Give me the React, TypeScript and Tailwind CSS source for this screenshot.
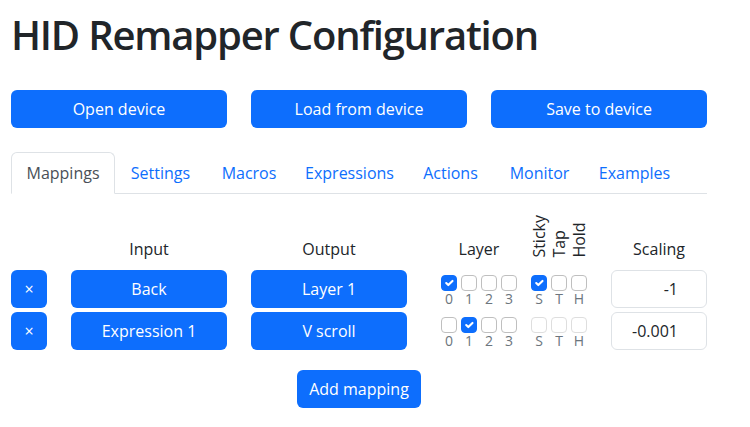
import React from "react";

const BLUE = "bg-[#0d6efd]";

function Check({ checked, disabled }: { checked?: boolean; disabled?: boolean }) {
  return (
    <div
      className={`w-[16px] h-[16px] rounded-[4px] border flex items-center justify-center ${
        checked ? "bg-[#0d6efd] border-[#0d6efd]" : "bg-white border-[#bfbfbf]"
      } ${disabled ? "opacity-50" : ""}`}
    >
      {checked && (
        <svg viewBox="0 0 20 20" className="w-[16px] h-[16px]">
          <path d="M6 10l3 3l6-6" fill="none" stroke="#fff" strokeWidth="3" strokeLinecap="round" strokeLinejoin="round" />
        </svg>
      )}
    </div>
  );
}

function CheckGroup({ labels, checkedIndex, disabled }: { labels: string[]; checkedIndex: number; disabled?: boolean }) {
  return (
    <div className="flex gap-[4px] self-start mt-[5px]">
      {labels.map((l, i) => (
        <div key={l} className="flex flex-col items-center w-[16px]">
          <Check checked={i === checkedIndex} disabled={disabled} />
          <div className="text-[14px] leading-[16px] text-[#6c757d]">{l}</div>
        </div>
      ))}
    </div>
  );
}

function Btn({ children, className = "" }: { children: React.ReactNode; className?: string }) {
  return (
    <div
      className={`${BLUE} text-white h-[38px] rounded-[6px] flex items-center justify-center text-[16px] leading-6 ${className}`}
    >
      {children}
    </div>
  );
}

function Row({ input, output, layer, sticky, stickyDisabled, scaling }: {
  input: string; output: string; layer: number; sticky: number; stickyDisabled?: boolean; scaling: string;
}) {
  return (
    <div className="flex items-center h-[38px]">
      <Btn className="w-[36px] text-[14px]">×</Btn>
      <Btn className="w-[156px] ml-[24px]">{input}</Btn>
      <Btn className="w-[156px] ml-[24px]">{output}</Btn>
      <div className="w-[96px] ml-[24px] flex justify-center self-stretch">
        <CheckGroup labels={["0", "1", "2", "3"]} checkedIndex={layer} />
      </div>
      <div className="w-[64px] flex justify-center self-stretch">
        <CheckGroup labels={["S", "T", "H"]} checkedIndex={sticky} disabled={stickyDisabled} />
      </div>
      <div className="w-[96px] ml-[20px] h-[38px] border border-[#dee2e6] rounded-[6px] flex items-center justify-end pr-[28px] text-[16px] text-[#212529]">
        {scaling}
      </div>
    </div>
  );
}

export default function App() {
  const tabs: [string, string][] = [
    ["Mappings", "w-[104px]"],
    ["Settings", "w-[91px]"],
    ["Macros", "w-[86px]"],
    ["Expressions", "w-[115px]"],
    ["Actions", "w-[87px]"],
    ["Monitor", "w-[91px]"],
    ["Examples", "w-[99px]"],
  ];
  return (
    <div className="w-[750px] h-[427px] bg-white text-[#212529] font-['Open_Sans','Noto_Sans',sans-serif] overflow-hidden">
      <div className="ml-[11px] w-[696px]">
        <h1 className="pt-[11px] text-[40px] leading-[48px] font-semibold tracking-[-1.2px] whitespace-nowrap">HID Remapper Configuration</h1>

        <div className="flex gap-[24px] mt-[31px]">
          <Btn className="w-[216px]">Open device</Btn>
          <Btn className="w-[216px]">Load from device</Btn>
          <Btn className="w-[216px]">Save to device</Btn>
        </div>

        <div className="flex mt-[24px] border-b border-[#dee2e6]">
          {tabs.map(([t, w], i) => (
            <div
              key={t}
              className={`${w} -mb-px py-2 text-center text-[16px] leading-6 border rounded-t-[6px] ${
                i === 0 ? "border-[#dee2e6] border-b-white text-[#495057] bg-white" : "border-transparent text-[#0d6efd]"
              }`}
            >
              {t}
            </div>
          ))}
        </div>

        <div className="mt-[17px] flex items-end h-[50px] text-[16px] leading-6">
          <div className="w-[36px]" />
          <div className="w-[156px] ml-[24px] text-center">Input</div>
          <div className="w-[156px] ml-[24px] text-center">Output</div>
          <div className="w-[96px] ml-[24px] text-center">Layer</div>
          <div className="w-[64px] flex justify-center gap-[4px] mb-[3px]">
            {["Sticky", "Tap", "Hold"].map((s) => (
              <div key={s} className="w-[16px] flex justify-center">
                <div className="[writing-mode:vertical-rl] rotate-180 leading-[16px] whitespace-nowrap">{s}</div>
              </div>
            ))}
          </div>
          <div className="w-[96px] ml-[20px] text-center">Scaling</div>
        </div>

        <div className="mt-[9px] flex flex-col gap-[4px]">
          <Row input="Back" output="Layer 1" layer={0} sticky={0} scaling="-1" />
          <Row input="Expression 1" output="V scroll" layer={1} sticky={-1} stickyDisabled scaling="-0.001" />
        </div>

        <div className="flex justify-center mt-[20px]">
          <Btn className="px-[12px]">Add mapping</Btn>
        </div>
      </div>
    </div>
  );
}
